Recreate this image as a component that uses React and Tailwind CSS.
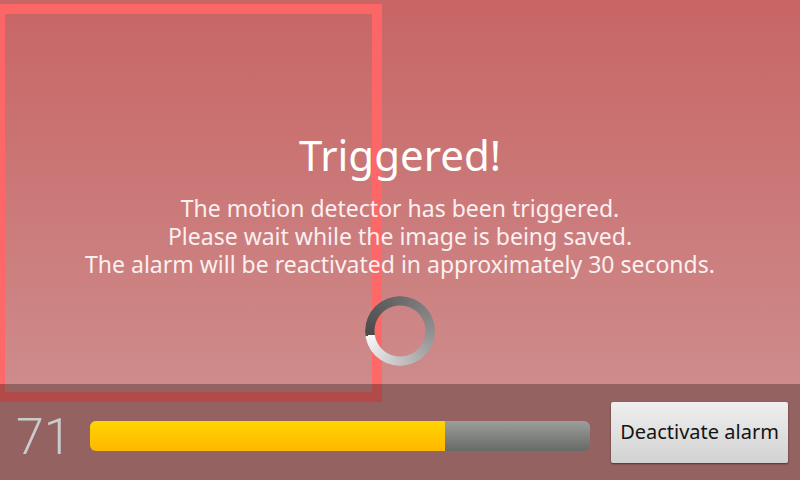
export default function App() {
  return (
    <div className="relative w-[800px] h-[480px] overflow-hidden bg-[#cf8d8d] flex flex-col font-['Noto_Sans',sans-serif]">
      <div className="absolute left-[-5px] top-[4px] w-[387px] h-[398px] border-[10px] border-[rgba(255,102,102,0.95)] z-10"></div>
      <div className="h-[384px] bg-[linear-gradient(to_bottom,#c86565,#ce8b8b)] flex flex-col items-center pt-[127px]">
        <div className="relative z-20 flex flex-col items-center">
          <div className="text-[42px] leading-[56px] text-white">Triggered!</div>
          <div className="mt-[11px] text-[23px] leading-[28px] text-[#fbf0f0] text-center">
            <div>The motion detector has been triggered.</div>
            <div>Please wait while the image is being saved.</div>
            <div>The alarm will be reactivated in approximately 30 seconds.</div>
          </div>
        </div>
        <div className="relative z-20 mt-[18px] w-[70px] h-[70px] rounded-full bg-[conic-gradient(from_262deg,#4a4a4a_0deg,#6c6c6c_100deg,#909090_190deg,#c4c4c4_280deg,#f6f6f6_358deg)] [mask-image:radial-gradient(circle,transparent_25px,black_26px)]"></div>
      </div>
      <div className="relative z-20 flex-1 bg-[rgba(40,20,20,0.35)] flex items-center">
        <div className="w-[90px] mt-[10px] pl-[16px] text-[50px] leading-[50px] font-light text-[#cbcbcb] font-['Roboto',sans-serif]">71</div>
        <div className="mt-[8px] w-[500px] h-[30px] rounded-[6px] overflow-hidden bg-[linear-gradient(to_bottom,#9c9f9b,#666a66)] flex">
          <div className="h-full bg-[linear-gradient(to_bottom,#ffd500,#ffb700)]" style={{ width: "71%" }}></div>
        </div>
        <button className="ml-[21px] w-[177px] h-[61px] rounded-[2px] bg-[linear-gradient(to_bottom,#efefef,#d2d2d2)] shadow-[0_1px_2px_rgba(0,0,0,0.5)] text-[20px] text-[#141414] font-['Noto_Sans',sans-serif]">
          Deactivate alarm
        </button>
      </div>
    </div>
  );
}
